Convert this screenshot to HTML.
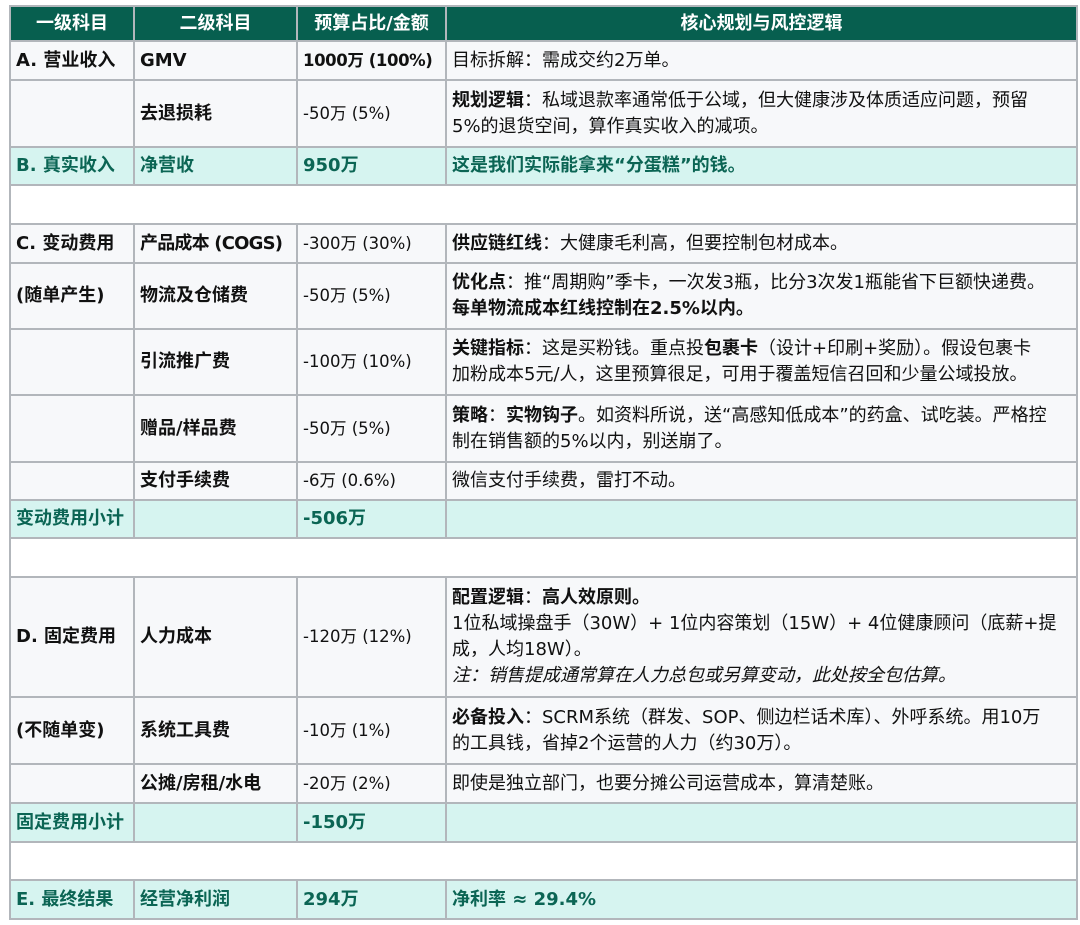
<!DOCTYPE html>
<html><head><meta charset="utf-8"><style>
body{margin:0;background:#fff;width:1080px;height:925px;overflow:hidden}
table{position:absolute;left:9px;top:5px;border-collapse:collapse;table-layout:fixed;width:1067px;font-family:"DejaVu Sans","Noto Sans CJK SC",sans-serif;font-size:18px;color:#111;line-height:26px}
td,th{border:2px solid #b2b6bb;padding:0 5px;background:#f7f8fa;vertical-align:middle;white-space:nowrap;overflow:hidden}
th{background:#075f4f;color:#fff;font-weight:bold;text-align:center;height:33px}
td.w{white-space:nowrap}
tr.g td{background:#d6f4f0;color:#0b6554;font-weight:bold}
tr.e td{background:#fff}
td.n{font-size:16.5px}
b{font-weight:bold}
</style></head><body>
<table>
<colgroup><col style="width:124px"><col style="width:163px"><col style="width:149px"><col style="width:631px"></colgroup>
<tr><th>一级科目</th><th>二级科目</th><th>预算占比/金额</th><th>核心规划与风控逻辑</th></tr>
<tr style="height:39px"><td><b>A. 营业收入</b></td><td><b>GMV</b></td><td class="n" style="letter-spacing:-0.4px"><b>1000万 (100%)</b></td><td>目标拆解：需成交约2万单。</td></tr>
<tr style="height:67px"><td></td><td><b>去退损耗</b></td><td class="n">-50万 (5%)</td><td class="w"><b>规划逻辑</b>：私域退款率通常低于公域，但大健康涉及体质适应问题，预留<br>5%的退货空间，算作真实收入的减项。</td></tr>
<tr class="g" style="height:38px"><td>B. 真实收入</td><td>净营收</td><td>950万</td><td>这是我们实际能拿来“分蛋糕”的钱。</td></tr>
<tr class="e" style="height:39px"><td colspan="4"></td></tr>
<tr style="height:39px"><td><b>C. 变动费用</b></td><td style="letter-spacing:-0.8px"><b>产品成本 (COGS)</b></td><td class="n">-300万 (30%)</td><td><b>供应链红线</b>：大健康毛利高，但要控制包材成本。</td></tr>
<tr style="height:66px"><td><b>(随单产生)</b></td><td><b>物流及仓储费</b></td><td class="n">-50万 (5%)</td><td class="w"><b>优化点</b>：推“周期购”季卡，一次发3瓶，比分3次发1瓶能省下巨额快递费。<br><b>每单物流成本红线控制在2.5%以内。</b></td></tr>
<tr style="height:66px"><td></td><td><b>引流推广费</b></td><td class="n">-100万 (10%)</td><td class="w"><b>关键指标</b>：这是买粉钱。重点投<b>包裹卡</b>（设计+印刷+奖励）。假设包裹卡<br>加粉成本5元/人，这里预算很足，可用于覆盖短信召回和少量公域投放。</td></tr>
<tr style="height:67px"><td></td><td><b>赠品/样品费</b></td><td class="n">-50万 (5%)</td><td class="w"><b>策略</b>：<b>实物钩子</b>。如资料所说，送“高感知低成本”的药盒、试吃装。严格控<br>制在销售额的5%以内，别送崩了。</td></tr>
<tr style="height:38px"><td></td><td><b>支付手续费</b></td><td class="n">-6万 (0.6%)</td><td>微信支付手续费，雷打不动。</td></tr>
<tr class="g" style="height:38px"><td>变动费用小计</td><td></td><td>-506万</td><td></td></tr>
<tr class="e" style="height:39px"><td colspan="4"></td></tr>
<tr style="height:120px"><td><b>D. 固定费用</b></td><td><b>人力成本</b></td><td class="n">-120万 (12%)</td><td class="w"><b>配置逻辑</b>：<b>高人效原则。</b><br>1位私域操盘手（30W）+ 1位内容策划（15W）+ 4位健康顾问（底薪+提<br>成，人均18W）。<br><i>注：销售提成通常算在人力总包或另算变动，此处按全包估算。</i></td></tr>
<tr style="height:67px"><td><b>(不随单变)</b></td><td><b>系统工具费</b></td><td class="n">-10万 (1%)</td><td class="w"><b>必备投入</b>：SCRM系统（群发、SOP、侧边栏话术库）、外呼系统。用10万<br>的工具钱，省掉2个运营的人力（约30万）。</td></tr>
<tr style="height:39px"><td></td><td><b>公摊/房租/水电</b></td><td class="n">-20万 (2%)</td><td>即使是独立部门，也要分摊公司运营成本，算清楚账。</td></tr>
<tr class="g" style="height:39px"><td>固定费用小计</td><td></td><td>-150万</td><td></td></tr>
<tr class="e" style="height:38px"><td colspan="4"></td></tr>
<tr class="g" style="height:39px"><td>E. 最终结果</td><td>经营净利润</td><td>294万</td><td>净利率 ≈ 29.4%</td></tr>
</table>
</body></html>
